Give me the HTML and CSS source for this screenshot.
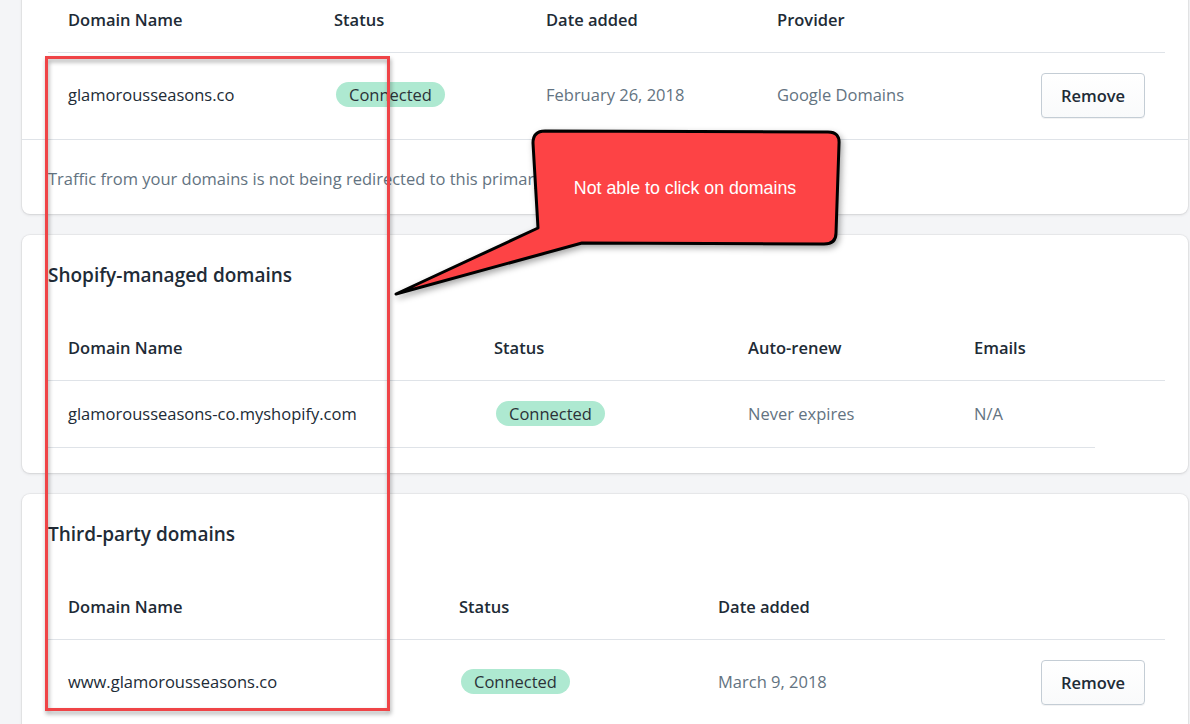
FILE: index.html
```html
<!DOCTYPE html>
<html lang="en">
<head>
<meta charset="utf-8">
<title>Domains</title>
<link rel="stylesheet" href="styles.css">
</head>
<body>
<main class="page">
  <section class="card card-first">
    <div class="table">
      <div class="row head cols-primary">
        <div>Domain Name</div><div>Status</div><div>Date added</div><div>Provider</div><div></div>
      </div>
      <div class="row data action cols-primary">
        <div class="name">glamorousseasons.co</div>
        <div><span class="badge">Connected</span></div>
        <div class="muted">February 26, 2018</div>
        <div class="muted">Google Domains</div>
        <div><button class="btn">Remove</button></div>
      </div>
    </div>
    <div class="footer muted">Traffic from your domains is not being redirected to this primary domain.</div>
  </section>

  <section class="card">
    <h2 class="card-title">Shopify-managed domains</h2>
    <div class="table">
      <div class="row head cols-managed">
        <div>Domain Name</div><div>Status</div><div>Auto-renew</div><div>Emails</div>
      </div>
      <div class="row data short cols-managed">
        <div class="name">glamorousseasons-co.myshopify.com</div>
        <div><span class="badge">Connected</span></div>
        <div class="muted">Never expires</div>
        <div class="muted">N/A</div>
      </div>
    </div>
  </section>

  <section class="card">
    <h2 class="card-title">Third-party domains</h2>
    <div class="table">
      <div class="row head cols-third">
        <div>Domain Name</div><div>Status</div><div>Date added</div><div></div>
      </div>
      <div class="row data action cols-third">
        <div class="name">www.glamorousseasons.co</div>
        <div><span class="badge">Connected</span></div>
        <div class="muted">March 9, 2018</div>
        <div><button class="btn">Remove</button></div>
      </div>
    </div>
  </section>
</main>

<div class="highlight-box"></div>
<div class="callout">
  <svg class="callout-shape" width="1190" height="724" viewBox="0 0 1190 724" aria-hidden="true">
    <path d="M545 131 L828 132 Q840 132 839 144 L836 233 Q836 244 824 244 L582 243 L396 294 L538 228 L533 143 Q533 131 545 131 Z" fill="#fd4345" stroke="#000" stroke-width="3" stroke-linejoin="round"/>
  </svg>
  <span class="callout-text">Not able to click on domains</span>
</div>
</body>
</html>
```

FILE: styles.css
```css
* { box-sizing: border-box; }

html, body {
  margin: 0;
  padding: 0;
  background: #f4f5f7;
  width: 1190px;
  height: 724px;
  overflow: hidden;
  font-family: "Open Sans", "Noto Sans", sans-serif;
  color: #212b36;
  position: relative;
}

.page {
  display: flex;
  flex-direction: column;
  gap: 21px;
  margin-top: -12px;
  padding-left: 22px;
  padding-right: 2px;
}

.card {
  background: #fff;
  border-radius: 8px;
  box-shadow: 0 0 0 1px rgba(63, 63, 68, 0.05), 0 1px 3px rgba(63, 63, 68, 0.15);
  padding: 28px 23px 25px 26px;
}

.card-first {
  padding: 0;
  border-top-left-radius: 0;
  border-top-right-radius: 0;
}

.card-first .table {
  padding: 0 23px 0 26px;
}

.card-title {
  margin: 0 0 29px 0;
  font-size: 19px;
  line-height: 24px;
  font-weight: 600;
  color: #212b36;
}

.row {
  display: grid;
  align-items: center;
  padding: 0 20px;
  font-size: 16.5px;
  line-height: 24px;
}

.row.head {
  font-weight: 600;
  padding-top: 20px;
  padding-bottom: 20px;
  border-bottom: 1px solid #dfe3e8;
}

.row.data.action {
  height: 86px;
  padding-bottom: 2px;
}

.row.data.short {
  height: 67px;
  margin-right: 70px;
  border-bottom: 1px solid #dfe3e8;
}

.cols-primary { grid-template-columns: 266px 212px 231px 1fr auto; }
.cols-managed { grid-template-columns: 426px 254px 226px 1fr; }
.cols-third { grid-template-columns: 391px 259px 1fr auto; }

.name { color: #212b36; }
.muted { color: #637381; }

.badge {
  display: inline-block;
  margin-left: 2px;
  margin-top: -4px;
  padding: 0 13px;
  height: 25px;
  line-height: 25px;
  border-radius: 13px;
  background: #aee9d1;
  color: #2b3238;
  font-size: 16.5px;
  vertical-align: middle;
}

.btn {
  display: block;
  width: 104px;
  height: 45px;
  border: 1px solid #c4cdd5;
  border-radius: 4px;
  background: linear-gradient(#fff, #f9fafb);
  box-shadow: 0 1px 0 rgba(22, 29, 37, 0.05);
  font-family: inherit;
  font-size: 16.5px;
  font-weight: 600;
  color: #212b36;
  padding: 0;
}

.footer {
  border-top: 1px solid #dfe3e8;
  padding: 27px 26px 23px 26px;
  font-size: 16.5px;
  line-height: 24px;
}

/* Annotation overlays */
.highlight-box {
  position: absolute;
  left: 45px;
  top: 56px;
  width: 345px;
  height: 655px;
  border: 3px solid #ef4447;
  filter: drop-shadow(1px 3px 2px rgba(0, 0, 0, 0.35));
}

.callout {
  position: absolute;
  left: 0;
  top: 0;
  width: 1190px;
  height: 724px;
  pointer-events: none;
}

.callout-shape {
  position: absolute;
  left: 0;
  top: 0;
  filter: drop-shadow(2px 3px 3px rgba(0, 0, 0, 0.35));
}

.callout-text {
  position: absolute;
  left: 545px;
  top: 177px;
  width: 280px;
  text-align: center;
  font-family: "Liberation Sans", Arial, sans-serif;
  font-size: 17.8px;
  line-height: 22px;
  color: #fff;
}
```
